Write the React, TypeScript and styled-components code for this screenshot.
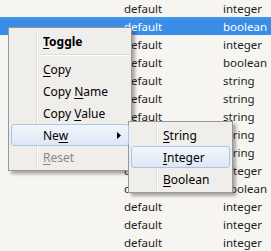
import React from "react";
import styled, { createGlobalStyle } from "styled-components";

const Global = createGlobalStyle`
  html, body { margin: 0; padding: 0; }
  body {
    background: #f7f5f2;
    font-family: "Noto Sans", "Open Sans", sans-serif;
    font-size: 11.5px;
    color: #1c1c1c;
    overflow: hidden;
  }
`;

const Page = styled.div`
  position: relative;
  width: 271px;
  height: 251px;
  overflow: hidden;
`;

const List = styled.div`
  display: flex;
  flex-direction: column;
  margin-top: -1px;
`;

const Row = styled.div<{ $selected?: boolean }>`
  display: flex;
  align-items: center;
  height: 18px;
  padding-left: 124px;
  background: ${(p) => (p.$selected ? "linear-gradient(#4a98ec, #3a8de6 20%, #3a8de6)" : "transparent")};
  color: ${(p) => (p.$selected ? "#ffffff" : "#1c1c1c")};
`;

const NameCell = styled.span`
  width: 99px;
`;

const TypeCell = styled.span``;

const Menu = styled.div<{ $left: number; $top: number; $width: number }>`
  position: absolute;
  left: ${(p) => p.$left}px;
  top: ${(p) => p.$top}px;
  width: ${(p) => p.$width}px;
  box-sizing: border-box;
  padding: 2px;
  border: 1px solid #979797;
  background: #f0eeeb;
  box-shadow: 3px 3px 3px rgba(60, 50, 40, 0.4);
  display: flex;
  flex-direction: column;
  color: #000;
  font-size: 12px;
`;

const Gutter = styled.div`
  position: absolute;
  left: 27px;
  top: 2px;
  bottom: 2px;
  width: 1px;
  background: #dedbd7;
  border-right: 1px solid #ffffff;
`;

const Item = styled.div<{ $active?: boolean; $disabled?: boolean; $bold?: boolean }>`
  position: relative;
  z-index: 1;
  display: flex;
  align-items: center;
  height: 22px;
  box-sizing: border-box;
  padding-left: 31px;
  padding-top: 1px;
  border: 1px solid ${(p) => (p.$active ? "#a9c5e8" : "transparent")};
  border-radius: 3px;
  background: ${(p) => (p.$active ? "linear-gradient(#f2f6fb, #dde7f4)" : "transparent")};
  color: ${(p) => (p.$disabled ? "#8a8886" : "#000")};
  font-weight: ${(p) => (p.$bold ? 700 : 400)};
`;

const Label = styled.span`
  white-space: pre;
`;

const Key = styled.span`
  text-decoration: underline;
  text-underline-offset: 2px;
`;

const Separator = styled.div`
  height: 6px;
  margin-left: 29px;
  display: flex;
  flex-direction: column;
  justify-content: center;
  &::before {
    content: "";
    display: block;
    height: 1px;
    background: #dedbd7;
  }
  &::after {
    content: "";
    display: block;
    height: 1px;
    background: #ffffff;
  }
`;

const Arrow = styled.svg`
  position: absolute;
  right: 7px;
  top: 7px;
`;

const rows: [string, string][] = [
  ["default", "integer"],
  ["default", "boolean"],
  ["default", "integer"],
  ["default", "boolean"],
  ["default", "string"],
  ["default", "string"],
  ["default", "string"],
  ["default", "string"],
  ["default", "string"],
  ["default", "integer"],
  ["default", "boolean"],
  ["default", "integer"],
  ["default", "integer"],
  ["default", "integer"],
];

export default function App() {
  return (
    <Page>
      <Global />
      <List>
        {rows.map(([n, t], i) => (
          <Row key={i} $selected={i === 1}>
            <NameCell>{n}</NameCell>
            <TypeCell>{t}</TypeCell>
          </Row>
        ))}
      </List>

      <Menu $left={8} $top={27} $width={124}>
        <Gutter />
        <Item $bold>
          <Label>
            <Key>T</Key>oggle
          </Label>
        </Item>
        <Separator />
        <Item>
          <Label>
            <Key>C</Key>opy
          </Label>
        </Item>
        <Item>
          <Label>
            Copy <Key>N</Key>ame
          </Label>
        </Item>
        <Item>
          <Label>
            Copy <Key>V</Key>alue
          </Label>
        </Item>
        <Item $active>
          <Label>
            Ne<Key>w</Key>
          </Label>
          <Arrow width="4" height="7" viewBox="0 0 4 7">
            <path d="M0 0 L4 3.5 L0 7 Z" fill="#000" />
          </Arrow>
        </Item>
        <Item $disabled>
          <Label>
            <Key>R</Key>eset
          </Label>
        </Item>
      </Menu>

      <Menu $left={128} $top={121} $width={105}>
        <Gutter />
        <Item>
          <Label>
            <Key>S</Key>tring
          </Label>
        </Item>
        <Item $active>
          <Label>
            <Key>I</Key>nteger
          </Label>
        </Item>
        <Item>
          <Label>
            <Key>B</Key>oolean
          </Label>
        </Item>
      </Menu>
    </Page>
  );
}
